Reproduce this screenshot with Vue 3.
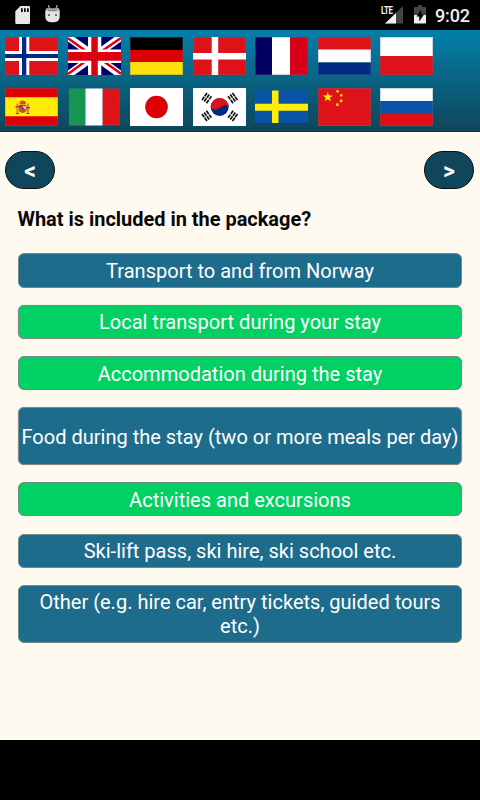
<script setup>
import { ref } from 'vue'

const options = ref([
  { text: 'Transport to and from Norway', selected: false },
  { text: 'Local transport during your stay', selected: true, outlined: true },
  { text: 'Accommodation during the stay', selected: true },
  { text: 'Food during the stay (two or more meals per day)', selected: false, tall: true, outlined: true },
  { text: 'Activities and excursions', selected: true },
  { text: 'Ski-lift pass, ski hire, ski school etc.', selected: false },
  { text: 'Other (e.g. hire car, entry tickets, guided tours etc.)', selected: false, tall: true }
])
const toggle = (o) => { o.selected = !o.selected }
</script>

<template>
  <div class="screen">
    <div class="status">
      <div class="status-left">
        <svg width="16" height="19" viewBox="0 0 16 19">
          <path d="M5.500 0H13.700a1.300 1.300 0 0 1 1.300 1.300v15.400A1.300 1.300 0 0 1 13.700 18H1.600a1.300 1.300 0 0 1-1.300-1.300V5.200z" fill="#e8e8e8" />
          <path d="M6 2.300h1.700v3.700H6zM9 2.300h1.700v3.700H9zM12 2.300h1.700v3.700H12z" fill="#000" />
        </svg>
        <svg class="droid" width="16" height="18" viewBox="0 0 16 18">
          <path d="M3.200 0l1.500 4M12.300 0l-1.500 4" stroke="#aaa" stroke-width="1.200" />
          <path d="M.7 6V4.500Q1.300 2.700 4 3.200h7.500q2.700-.5 3 1.300V6z" fill="#aaa" />
          <path d="M.3 5.500h14.400v6c0 3.500-2.300 5.700-5.200 5.700H5.500C2.600 17.200.3 15 .3 11.500z" fill="#e4e4e4" />
          <path d="M3 4.800h9v1.500H3z" fill="#888" />
          <circle cx="4" cy="10" r="1.100" fill="#555" /><circle cx="11" cy="10" r="1.100" fill="#555" />
        </svg>
      </div>
      <div class="status-right">
        <div class="signal">
          <svg width="23" height="19" viewBox="0 0 23 19">
            <path d="M4 18.500L22 1v17.500z" fill="#444" /><path d="M4 18.500L15 8v10.500z" fill="#f2f2f2" />
          </svg>
          <span class="lte">LTE</span>
        </div>
        <svg class="battery" width="12" height="19" viewBox="0 0 12 19">
          <path d="M4 0h4v2h3q1 0 1 1v7H0V3q0-1 1-1h3z" fill="#444" />
          <path d="M0 10h12v7.500q0 1-1 1H1q-1 0-1-1z" fill="#f2f2f2" />
          <path d="M7.200 4.500L2.500 11.500h2.800v5L10 9.500H7.200z" fill="#000" />
        </svg>
        <span class="clock">9:02</span>
      </div>
    </div>

    <header class="languages">
      <svg class="flag" viewBox="0 0 53 38">
        <path fill="#de1219" d="M0 0h53v38H0z" /><path class="edge" d="M.5.5h52v37H.5z" />
        <path fill="#fff" d="M14 0h10.300v38H14zM0 14h53v10H0z" /><path fill="#012a85" d="M17 0h4.300v38H17zM0 17h53v4H0z" />
      </svg>
      <svg class="flag" viewBox="0 0 53 38">
        <path fill="#02006a" d="M0 0h53v38H0z" />
        <path d="M0 0l53 38M53 0L0 38" stroke="#fff" stroke-width="7.500" />
        <path d="M0 1.200L22 17M53 1L31 16M0 37l22-16M53 36.800L31 21" stroke="#dc0010" stroke-width="2.500" />
        <path fill="#fff" d="M20 0h13.300v38H20zM0 12.500h53V26H0z" /><path fill="#dc0010" d="M23.300 0h6.500v38h-6.500zM0 15h53v8.700H0z" />
      </svg>
      <svg class="flag" viewBox="0 0 53 38">
        <path fill="#000" d="M0 0h53v13H0z" /><path fill="#dc0007" d="M0 13h53v12H0z" /><path fill="#ffe008" d="M0 25h53v13H0z" /><path class="edge" d="M.5.5h52v37H.5z" />
      </svg>
      <svg class="flag" viewBox="0 0 53 38">
        <path fill="#de1219" d="M0 0h53v38H0z" /><path class="edge" d="M.5.5h52v37H.5z" /><path fill="#fff" d="M18.700 0h6.500v38h-6.500zM0 16h53v6.500H0z" />
      </svg>
      <svg class="flag" viewBox="0 0 53 38">
        <path fill="#020061" d="M0 0h17v38H0z" /><path fill="#fff" d="M17 0h18v38H17z" /><path fill="#d80018" d="M35 0h18v38H35z" /><path class="edge" d="M.5.5h52v37H.5z" />
      </svg>
      <svg class="flag" viewBox="0 0 53 38">
        <path fill="#de1219" d="M0 0h53v12.500H0z" /><path fill="#fff" d="M0 12.500h53V25.500H0z" /><path fill="#012a85" d="M0 25.500h53V38H0z" /><path class="edge" d="M.5.5h52v37H.5z" />
      </svg>
      <svg class="flag" viewBox="0 0 53 38">
        <path fill="#fff" d="M0 0h53v19H0z" /><path fill="#de1219" d="M0 19h53v19H0z" /><path class="edge" d="M.5.5h52v37H.5z" />
      </svg>

      <svg class="flag" viewBox="0 0 53 38">
        <path fill="#de0007" d="M0 0h53v38H0z" /><path fill="#ffed08" d="M0 9.300h53v19H0z" /><path class="edge" d="M.5.5h52v37H.5z" />
        <path fill="#c58d54" d="M11.500 15.500h2V25h-2zM22 15.500h2V25h-2z" />
        <path fill="#b75b2b" d="M14.500 14.500q-.5-1.500 2-1.500l1-1 1 1q3 0 2.500 1.500l-.5 2h-5.500zM14 17h7.500v6q-3.700 4-7.500 0z" />
        <path fill="#d52b22" d="M14.500 17h3v3h-3zM10.500 18h4v1.500h-4zM21 19h4v1.500h-4z" />
        <path fill="#e6b0b0" d="M18 18h3v3h-3z" /><path fill="#80436a" d="M17 20h2v2h-2zM11 25h3v1h-3zM21.500 25h3v1h-3z" />
      </svg>
      <svg class="flag" viewBox="0 0 53 38">
        <path fill="#169653" d="M1 .5h17v37H1z" /><path fill="#de1219" d="M34.500.5H51.500v37h-17z" /><path class="edge" d="M1.500 1h50v36h-50z" /><path fill="#fff" d="M17.500.5H34.500v37h-17z" />
      </svg>
      <svg class="flag" viewBox="0 0 53 38"><path fill="#fff" d="M0 0h53v38H0z" /><circle cx="26.500" cy="19" r="11.300" fill="#de0007" /></svg>
      <svg class="flag" viewBox="0 0 53 38">
        <path fill="#fff" d="M0 0h53v38H0z" />
        <circle cx="26.700" cy="19" r="9" fill="#012a85" />
        <path fill="#de1219" d="M17.700 19a9 9 0 0 1 18 0q-2.500-3-5.500-1.500t-5 3.500q-4 2-7.500-2z" />
        <g stroke="#111" stroke-width="1.700" stroke-dasharray="4 .7">
          <path d="M9 12l5-7M11.200 13.600l5-7M13.400 15.200l5-7M9 26l5 7M11.200 24.400l5 7M13.400 22.800l5 7M44.500 12l-5-7M42.300 13.600l-5-7M40.100 15.200l-5-7M44.500 26l-5 7M42.300 24.400l-5 7M40.100 22.800l-5 7" />
        </g>
      </svg>
      <svg class="flag" viewBox="0 0 53 38">
        <path fill="#0954a9" d="M0 2.500h53V35H0z" /><path fill="#ffed08" d="M17 2.500h6.500V35H17zM0 15.700h53v7H0z" />
      </svg>
      <svg class="flag" viewBox="0 0 53 38">
        <path fill="#de1219" d="M0 0h53v38H0z" /><path class="edge" d="M.5.5h52v37H.5z" />
        <path fill="#ffed08" d="M9.800 3.800l1.250 3.600 3.800.08-3.030 2.300 1.100 3.650-3.120-2.180-3.120 2.180 1.100-3.650-3.030-2.300 3.800-.08z" />
        <path fill="#f7cb0b" d="M18 2.200l2.700-.3v2.800l-2.400-.5zM22 6l2.800.3-.7 2.400-2.300-.4zM22 11.500l2.600.3-.4 2.600-2.500-.5zM18 15.600l2.600-.3.100 2.600-2.500.2z" />
      </svg>
      <svg class="flag" viewBox="0 0 53 38">
        <path fill="#fff" d="M0 0h53v13H0z" /><path fill="#0954a9" d="M0 13h53v12.300H0z" /><path fill="#de0c15" d="M0 25.300h53V38H0z" /><path class="edge" d="M.5.5h52v37H.5z" />
      </svg>
    </header>

    <main>
      <nav>
        <button class="arrow"><span>&lt;</span></button>
        <button class="arrow"><span>&gt;</span></button>
      </nav>
      <h1>What is included in the package?</h1>
      <div class="options">
        <button
          v-for="o in options" :key="o.text" class="option"
          :class="{ selected: o.selected, tall: o.tall, outlined: o.outlined }"
          @click="toggle(o)"
        >{{ o.text }}</button>
      </div>
    </main>
  </div>
</template>

<style>
body { background: #000; }
</style>

<style scoped>
.screen { width: 480px; height: 800px; background: #000; display: flex; flex-direction: column; font-family: Roboto, "Liberation Sans", sans-serif; overflow: hidden; }
.status { height: 30px; flex: none; display: flex; justify-content: space-between; color: #f0f0f0; }
.status-left { display: flex; padding: 6px 0 0 15px; gap: 14px; align-items: flex-start; }
.droid { margin-top: -1px; }
.status-right { display: flex; align-items: flex-start; padding: 5px 10px 0 0; }
.signal { position: relative; width: 33px; }
.lte { position: absolute; left: 0; top: 0; font-size: 11px; font-weight: 700; line-height: 11px; letter-spacing: -0.500px; transform: scaleX(.72); transform-origin: left; }
.signal svg { display: block; width: 23px; }
.battery { margin-right: 8.500px; }
.clock { font-size: 18px; font-weight: 500; line-height: 21px; letter-spacing: -0.100px; }
.languages { box-sizing: border-box; height: 102px; flex: none; padding: 7px 0 0 5px; display: grid; grid-template-columns: repeat(7, 53px); grid-template-rows: 38px 38px; gap: 13px 9.500px; background: linear-gradient(#0480aa, #0e4659); border-bottom: 1px solid #0a3244; }
.flag { display: block; width: 53px; height: 38px; }
.edge { fill: none; stroke: #5a7590; stroke-opacity: .3; stroke-width: 1; }
main { height: 608px; flex: none; background: #fffaf0; }
nav { display: flex; justify-content: space-between; padding: 19px 6px 0 5px; }
button { font-family: inherit; margin: 0; color: #fff; }
.arrow { box-sizing: border-box; width: 50px; height: 38px; border: 1.500px solid #080e13; border-radius: 19px; background: #10465b; padding: 4px 0 0; font-size: 23px; font-weight: 700; line-height: 24px; }
h1 { margin: 18px 0 0 17.500px; font-size: 19.950px; line-height: 24px; font-weight: 700; color: #080808; white-space: nowrap; }
.options { padding: 22.400px 18px 0; display: flex; flex-direction: column; gap: 17.100px; }
.option { box-sizing: border-box; width: 444px; height: 34.200px; border: 1px solid #718a8c; border-radius: 6px; background: #1e6c8c; padding: 1px 0 0; font-size: 20.040px; line-height: 24px; }
.option.tall { height: 57.900px; white-space: normal; }
.option.outlined { border: 1px solid #888; box-shadow: 0 0 1px #888; }
.option.selected { background: #00d162; }
</style>
